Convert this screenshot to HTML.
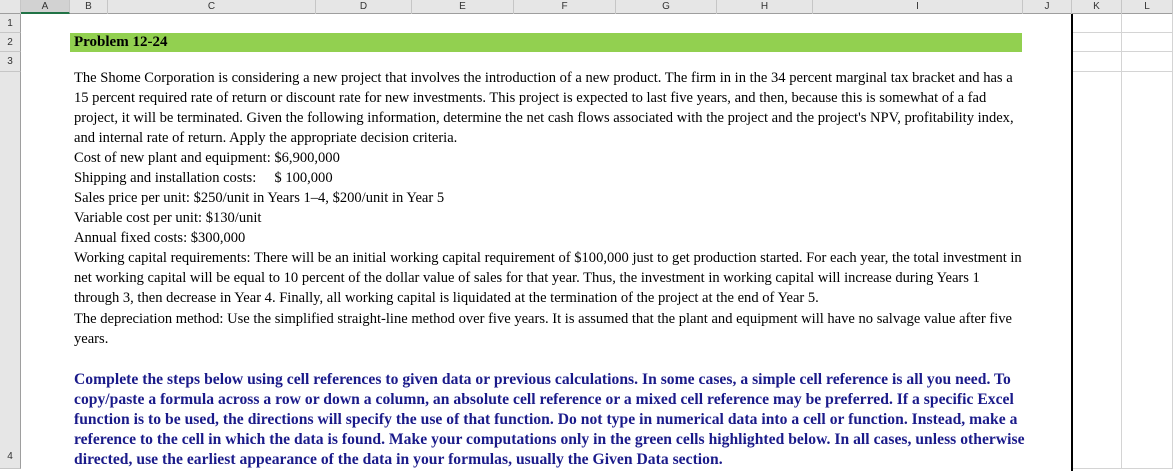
<!DOCTYPE html>
<html><head><style>
*{margin:0;padding:0;box-sizing:border-box}
html,body{width:1173px;height:471px;overflow:hidden;background:#fff}
body{position:relative;font-family:"Liberation Sans",sans-serif}
.hdr{position:absolute;top:0;left:0;width:1173px;height:14px;background:#e6e6e6;border-bottom:1px solid #9e9e9e}
.col{position:absolute;top:0;height:14px;border-right:1px solid #c6c6c6;font-size:10px;color:#333;text-align:center;line-height:14px}
.rh{position:absolute;left:0;width:21px;background:#e6e6e6;border-right:1px solid #9e9e9e;border-bottom:1px solid #c6c6c6;font-size:10px;color:#333;text-align:center}
.l{position:absolute;left:74px;white-space:nowrap;font-family:"Liberation Serif",serif;font-size:14.55px;color:#000}
.b{font-weight:bold;color:#1a1a8a;font-size:15.6px;letter-spacing:0.03px}
.g{position:absolute;border-bottom:1px solid #d4d4d4;border-right:1px solid #d4d4d4}
</style></head><body>
<div class="hdr"></div>
<div class="col" style="left:0;width:21px"></div>
<div class="col" style="left:21px;width:49px;background:#d2d2d2;border-bottom:2px solid #217346">A</div>
<div class="col" style="left:70px;width:38px">B</div>
<div class="col" style="left:108px;width:208px">C</div>
<div class="col" style="left:316px;width:96px">D</div>
<div class="col" style="left:412px;width:102px">E</div>
<div class="col" style="left:514px;width:102px">F</div>
<div class="col" style="left:616px;width:101px">G</div>
<div class="col" style="left:717px;width:96px">H</div>
<div class="col" style="left:813px;width:210px">I</div>
<div class="col" style="left:1023px;width:49px">J</div>
<div class="col" style="left:1072px;width:50px">K</div>
<div class="col" style="left:1122px;width:51px">L</div>
<div class="rh" style="top:14px;height:19px;line-height:19px">1</div>
<div class="rh" style="top:33px;height:19px;line-height:19px">2</div>
<div class="rh" style="top:52px;height:20px;line-height:20px">3</div>
<div class="rh" style="top:72px;height:397px;line-height:770px">4</div>
<div class="g" style="left:1073px;top:14px;width:49px;height:19px"></div>
<div class="g" style="left:1122px;top:14px;width:51px;height:19px"></div>
<div class="g" style="left:1073px;top:33px;width:49px;height:19px"></div>
<div class="g" style="left:1122px;top:33px;width:51px;height:19px"></div>
<div class="g" style="left:1073px;top:52px;width:49px;height:20px"></div>
<div class="g" style="left:1122px;top:52px;width:51px;height:20px"></div>
<div class="g" style="left:1073px;top:72px;width:49px;height:397px"></div>
<div class="g" style="left:1122px;top:72px;width:51px;height:397px"></div>
<div style="position:absolute;left:1071px;top:14px;width:2px;height:457px;background:#000"></div>
<div style="position:absolute;left:70px;top:33px;width:952px;height:19px;background:#92d050"></div>
<div class="l" style="top:34px;font-weight:bold;font-size:15px">Problem 12-24</div>
<div class="l" style="top:70px">The Shome Corporation is considering a new project that involves the introduction of a new product. The firm in in the 34 percent marginal tax bracket and has a</div>
<div class="l" style="top:90px">15 percent required rate of return or discount rate for new investments. This project is expected to last five years, and then, because this is somewhat of a fad</div>
<div class="l" style="top:110px">project, it will be terminated. Given the following information, determine the net cash flows associated with the project and the project's NPV, profitability index,</div>
<div class="l" style="top:130px">and internal rate of return. Apply the appropriate decision criteria.</div>
<div class="l" style="top:150px">Cost of new plant and equipment: $6,900,000</div>
<div class="l" style="top:170px">Shipping and installation costs: &nbsp;&nbsp;&nbsp;&nbsp;$ 100,000</div>
<div class="l" style="top:190px">Sales price per unit: $250/unit in Years 1–4, $200/unit in Year 5</div>
<div class="l" style="top:210px">Variable cost per unit: $130/unit</div>
<div class="l" style="top:230px">Annual fixed costs: $300,000</div>
<div class="l" style="top:250px">Working capital requirements: There will be an initial working capital requirement of $100,000 just to get production started. For each year, the total investment in</div>
<div class="l" style="top:270px">net working capital will be equal to 10 percent of the dollar value of sales for that year. Thus, the investment in working capital will increase during Years 1</div>
<div class="l" style="top:290px">through 3, then decrease in Year 4. Finally, all working capital is liquidated at the termination of the project at the end of Year 5.</div>
<div class="l" style="top:311px">The depreciation method: Use the simplified straight-line method over five years. It is assumed that the plant and equipment will have no salvage value after five</div>
<div class="l" style="top:331px">years.</div>
<div class="l b" style="top:371px">Complete the steps below using cell references to given data or previous calculations. In some cases, a simple cell reference is all you need. To</div>
<div class="l b" style="top:391px">copy/paste a formula across a row or down a column, an absolute cell reference or a mixed cell reference may be preferred. If a specific Excel</div>
<div class="l b" style="top:411px">function is to be used, the directions will specify the use of that function. Do not type in numerical data into a cell or function. Instead, make a</div>
<div class="l b" style="top:431px">reference to the cell in which the data is found. Make your computations only in the green cells highlighted below. In all cases, unless otherwise</div>
<div class="l b" style="top:451px">directed, use the earliest appearance of the data in your formulas, usually the Given Data section.</div>
</body></html>
